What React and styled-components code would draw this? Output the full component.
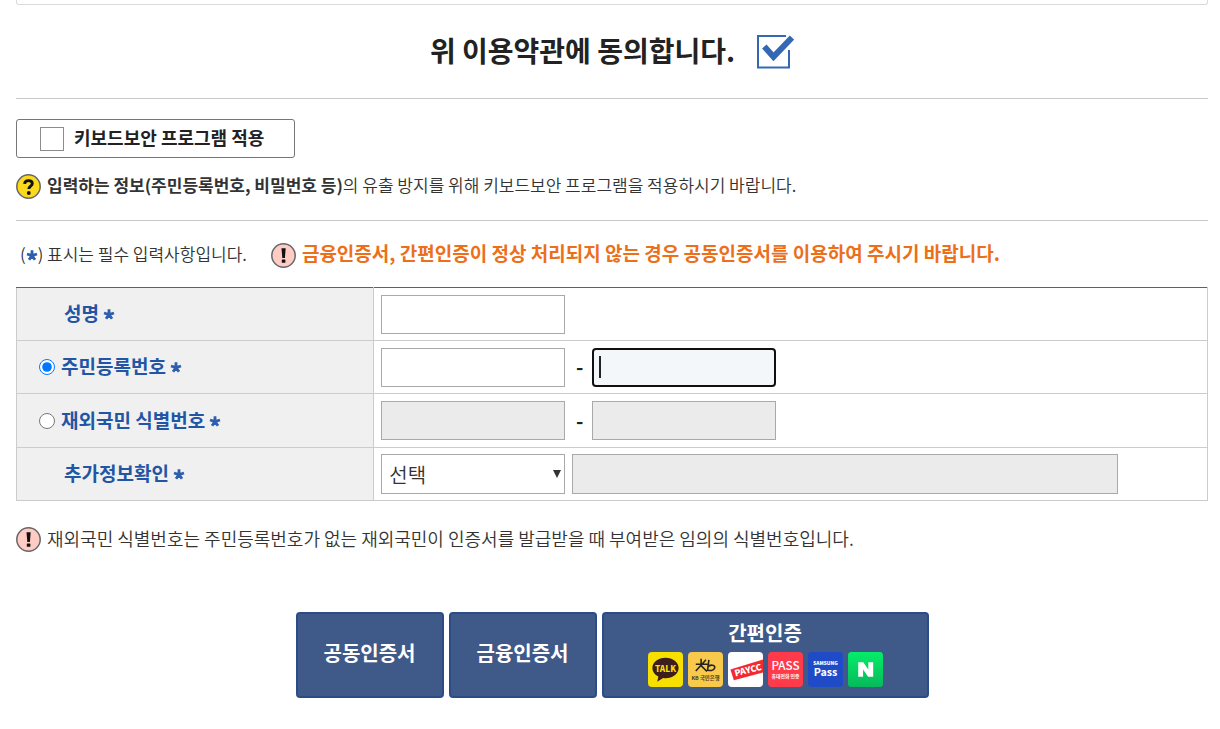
import React from "react";
import styled, { createGlobalStyle, css } from "styled-components";

const GlobalStyle = createGlobalStyle`
  *, *::before, *::after { box-sizing: border-box; }
  body {
    margin: 0;
    background: #fff;
    color: #222;
    font-family: "Noto Sans CJK KR", "Noto Sans", sans-serif;
    font-size: 17px;
  }
  button, input, select { font-family: inherit; margin: 0; }
`;

const Page = styled.main`
  padding: 0 12px 32px 16px;
`;

const TermsBox = styled.div`
  height: 5px;
  border: 1px solid #dadada;
  border-top: 0;
  border-radius: 0 0 3px 3px;
`;

const Agreement = styled.label`
  display: flex;
  align-items: center;
  justify-content: center;
  gap: 22px;
  height: 94px;
  border-bottom: 1px solid #c8c8c8;
  font-size: 28px;
  font-weight: 700;
  line-height: 40px;
  cursor: pointer;

  > span:first-child { padding-bottom: 4px; }
`;

const CheckFace = styled.span`
  position: relative;
  display: block;
  width: 37px;
  height: 34px;

  input {
    position: absolute;
    inset: 0;
    width: 100%;
    height: 100%;
    opacity: 0;
  }
  svg { display: block; }
  input:not(:checked) + svg .tick { display: none; }
`;

const Security = styled.section`
  display: flex;
  flex-direction: column;
  align-items: flex-start;
  gap: 15px;
  height: 122px;
  padding-top: 20px;
  border-bottom: 1px solid #c8c8c8;
`;

const KeyboardOption = styled.label`
  display: flex;
  align-items: center;
  gap: 10px;
  width: 279px;
  height: 39px;
  padding-left: 23px;
  border: 1px solid #767676;
  border-radius: 3px;
  font-size: 18px;
  font-weight: 700;
  line-height: 24px;

  span { padding-bottom: 3px; }
`;

const SquareCheck = styled.input`
  appearance: none;
  width: 24px;
  height: 24px;
  border: 1px solid #8c8c8c;
  background: #fff;
  &:checked { background: #3468b4; }
`;

const Notice = styled.p`
  display: flex;
  align-items: center;
  gap: 6px;
  margin: 0;
  color: #333;
  font-size: ${(p) => (p.$large ? "18px" : "17px")};
  font-weight: 350;
  line-height: 24px;
  b { font-weight: 700; }
  svg { flex: none; }
  span { padding-bottom: 2px; }
`;

const Guide = styled.div`
  display: flex;
  align-items: center;
  gap: 24px;
  height: 66px;
  padding: 2px 0 0 4px;
`;

const RequiredHint = styled.p`
  margin: 0;
  padding-bottom: 4px;
  color: #333;
  font-size: 17px;
  font-weight: 350;
`;

const Warning = styled.strong`
  display: flex;
  align-items: center;
  gap: 6px;
  color: #ec6f1a;
  font-size: 19px;
  font-weight: 700;
  line-height: 26px;

  span { padding-bottom: 4px; }
`;

const FormTable = styled.table`
  width: 100%;
  table-layout: fixed;
  border-collapse: collapse;
  border: 1px solid #ccc;
  border-top-color: #3468b4;

  th, td {
    height: 53px;
    padding: 0 7px;
    border: 1px solid #ccc;
    vertical-align: middle;
  }
  tr:first-child > * { border-top-color: #3468b4; }
  tr:nth-child(3) > * { height: 54px; }
  th {
    width: 30%;
    padding: 0 0 0 22px;
    background: #f0f0f0;
    text-align: left;
  }
`;

const FieldLabel = styled.label`
  display: flex;
  align-items: center;
  gap: 4px;
  padding-left: ${(p) => (p.$indent ? "25px" : "0")};
  color: #2255a4;
  font-size: 19px;
  font-weight: 700;
  line-height: 26px;

  span { padding-bottom: 2px; }
`;

const Radio = styled.input`
  width: 16px;
  height: 16px;
  && { margin: 0 2px 0 0; }
`;

const Fields = styled.div`
  display: flex;
  align-items: center;
  gap: ${(p) => (p.$tight ? "7px" : "0")};
`;

const controlFrame = css`
  height: ${(p) => (p.$tall ? "40px" : "39px")};
  border: 1px solid #a9a9a9;
  border-radius: 0;
  background: #fff;
  color: #333;
`;

const TextBox = styled.input`
  ${controlFrame}
  flex: 0 1 ${(p) => (p.$wide ? "546px" : "184px")};
  min-width: 0;
  padding: 0 6px;
  font-size: 20px;

  &:disabled { background: #ebebeb; }
  &:focus {
    padding: 0 5px;
    border: 2px solid #101010;
    border-radius: 4px;
    outline: 0;
    background: #f3f7f9;
  }
  &:focus:placeholder-shown {
    caret-color: transparent;
    background: linear-gradient(#222, #222) 5px center / 2px 22px no-repeat #f3f7f9;
  }
`;

const SelectWrap = styled.span`
  position: relative;
  flex: 0 1 184px;
  &::after {
    content: "";
    position: absolute;
    top: 16px;
    right: 4px;
    border: 4px solid transparent;
    border-top: 8px solid #333;
    border-bottom: 0;
    pointer-events: none;
  }
`;

const Select = styled.select`
  ${controlFrame}
  display: block;
  width: 100%;
  appearance: none;
  padding: 0 7px;
  font-size: 20px;
  font-weight: 350;
`;

const Dash = styled.span`
  width: 27px;
  padding-left: 2px;
  text-align: center;
  font-size: 20px;
  font-weight: 700;
  line-height: 28px;
`;

const FootNotice = styled(Notice)`
  margin-top: 25px;
`;

const Actions = styled.div`
  display: flex;
  justify-content: center;
  gap: 5px;
  margin-top: 60px;
`;

const AuthButton = styled.button`
  display: flex;
  flex-direction: column;
  align-items: center;
  justify-content: center;
  gap: 5px;
  width: ${(p) => (p.$wide ? "327px" : "148px")};
  height: 86px;
  padding: 0 0 4px;
  border: 2px solid #2b4c87;
  border-radius: 4px;
  background: #3f5989;
  color: #fff;
  font-size: 20px;
  font-weight: 700;
  line-height: 28px;
  cursor: pointer;
`;

const Logos = styled.span`
  display: flex;
  gap: 5px;
`;

function Star() {
  return (
    <svg width="12" height="12" viewBox="0 0 12 12" role="img" aria-label="필수">
      <path
        d="M6 6.6V1.2M6 6.6L1 5M6 6.6L11 5M6 6.6L3 10.8M6 6.6L9 10.8"
        stroke="#2d5fae"
        strokeWidth="2.8"
        fill="none"
      />
    </svg>
  );
}

const InlineStar = styled.span`
  display: inline-block;
  line-height: 0;
`;

function RoundIcon({ kind }) {
  const question = kind === "question";
  return (
    <svg width="25" height="25" viewBox="0 0 25 25" aria-hidden="true">
      <circle cx="12.5" cy="12.5" r="11.7" fill={question ? "#fbd91c" : "#ffcbc5"} stroke="#666" strokeWidth="1.5" />
      {question ? (
        <g>
          <path d="M8.6 9.900C8.700 7.600 10.200 6.600 12.500 6.600c2.300 0 3.800 1.100 3.800 3 0 2.600-3.500 2.600-3.500 5.400" fill="none" stroke="#111" strokeWidth="2.9" />
          <circle cx="12.8" cy="19" r="1.9" fill="#111" />
        </g>
      ) : (
        <g fill="#111">
          <path d="M10.500 5.200h4.200l-.8 9.700h-2.600z" />
          <rect x="10.800" y="16.500" width="3.600" height="3.300" rx=".6" />
        </g>
      )}
    </svg>
  );
}

function CheckMark() {
  return (
    <svg width="37" height="34" viewBox="0 0 37 34" aria-hidden="true">
      <path d="M1 1h31V32.500H1z" fill="#fff" stroke="#3468b4" strokeWidth="2" />
      <g className="tick">
        <path d="M29 0h7v15h-6z" fill="#fff" />
        <path d="M7.500 12l9 10L35.500 2.500" fill="none" stroke="#fff" strokeWidth="8" />
        <path d="M7.300 11.500l9.200 10.300L35 2.500" fill="none" stroke="#3468b4" strokeWidth="6" />
      </g>
    </svg>
  );
}

const logoFont = '"Noto Sans CJK KR", sans-serif';

function Tile({ fill, name, children }) {
  const clip = `tile-${name}`;
  return (
    <svg width="35" height="35" viewBox="0 0 36 36" role="img" aria-label={name}>
      <clipPath id={clip}>
        <rect width="36" height="36" rx="4" />
      </clipPath>
      <g clipPath={`url(#${clip})`} textAnchor="middle" fontFamily={logoFont}>
        <rect width="36" height="36" fill={fill} />
        {children}
      </g>
    </svg>
  );
}

function ProviderLogos() {
  return (
    <Logos>
      <Tile fill="#f7df00" name="talk">
        <path d="M18 6C10.500 6 4.500 10.700 4.500 16.500c0 3.700 2.500 7 6.200 8.800L9.500 30.500l6-3.700c.8.1 1.600.2 2.500.2 7.500 0 13.500-4.700 13.500-10.500S25.500 6 18 6z" fill="#3c1e1e" />
        <text x="18" y="20.500" fontSize="8.500" fontWeight="900" fill="#f7df00">TALK</text>
      </Tile>
      <Tile fill="#f8c94b" name="kb">
        <path d="M8 12.500h12M18.500 8L8 19.500M13.500 7v7l6 6M21.500 8l-1.500 11.500M20.500 15.500c1.500-3 8-2.500 7 .8s-5 3.200-7.500 2.200" fill="none" stroke="#26221c" strokeWidth="1.600" />
        <text x="18" y="29" fontSize="5.500" fill="#4b3b16">KB 국민은행</text>
      </Tile>
      <Tile fill="#fff" name="payco">
        <path d="M2.500 18L38 7v13.500L6 29z" fill="#f4282d" />
        <text x="21" y="22" fontSize="9" fontWeight="900" fill="#fff" transform="rotate(-14 20 20)">PAYCC</text>
      </Tile>
      <Tile fill="#ff3b4b" name="pass">
        <text x="18" y="18" fontSize="12" fontWeight="500" fill="#fff">PASS</text>
        <text x="18" y="27" fontSize="5" fill="#fff">휴대전화 인증</text>
      </Tile>
      <Tile fill="#1f4bc6" name="samsung">
        <text x="18" y="13.500" fontSize="5" fontWeight="900" fill="#fff">SAMSUNG</text>
        <text x="18" y="25" fontSize="11" fontWeight="700" fill="#fff">Pass</text>
      </Tile>
      <Tile fill="#06d363" name="naver">
        <linearGradient id="naver-green" x1="0" y1="0" x2="0" y2="1">
          <stop offset="0" stopColor="#04ed69" />
          <stop offset="1" stopColor="#07b95c" />
        </linearGradient>
        <rect width="36" height="36" fill="url(#naver-green)" />
        <path d="M10.500 10.500h5.200l5.200 7.600v-7.600h5v15h-5.200l-5.200-7.600v7.600h-5z" fill="#fff" />
      </Tile>
    </Logos>
  );
}

export default function App() {
  return (
    <>
      <GlobalStyle />
      <Page>
        <TermsBox />
        <Agreement>
          <span>위 이용약관에 동의합니다.</span>
          <CheckFace>
            <input type="checkbox" defaultChecked />
            <CheckMark />
          </CheckFace>
        </Agreement>

        <Security>
          <KeyboardOption>
            <SquareCheck type="checkbox" />
            <span>키보드보안 프로그램 적용</span>
          </KeyboardOption>
          <Notice>
            <RoundIcon kind="question" />
            <span>
              <b>입력하는 정보(주민등록번호, 비밀번호 등)</b>의 유출 방지를 위해 키보드보안 프로그램을 적용하시기 바랍니다.
            </span>
          </Notice>
        </Security>

        <Guide>
          <RequiredHint>
            (<InlineStar><Star /></InlineStar>) 표시는 필수 입력사항입니다.
          </RequiredHint>
          <Warning>
            <RoundIcon kind="alert" />
            <span>금융인증서, 간편인증이 정상 처리되지 않는 경우 공동인증서를 이용하여 주시기 바랍니다.</span>
          </Warning>
        </Guide>

        <FormTable>
          <tbody>
            <tr>
              <th scope="row">
                <FieldLabel $indent htmlFor="name"><span>성명</span><Star /></FieldLabel>
              </th>
              <td>
                <Fields><TextBox id="name" type="text" /></Fields>
              </td>
            </tr>
            <tr>
              <th scope="row">
                <FieldLabel>
                  <Radio type="radio" name="idType" defaultChecked />
                  <span>주민등록번호</span><Star />
                </FieldLabel>
              </th>
              <td>
                <Fields>
                  <TextBox type="text" aria-label="주민등록번호 앞자리" />
                  <Dash>-</Dash>
                  <TextBox type="text" aria-label="주민등록번호 뒷자리" placeholder=" " autoFocus />
                </Fields>
              </td>
            </tr>
            <tr>
              <th scope="row">
                <FieldLabel>
                  <Radio type="radio" name="idType" />
                  <span>재외국민 식별번호</span><Star />
                </FieldLabel>
              </th>
              <td>
                <Fields>
                  <TextBox type="text" aria-label="식별번호 앞자리" disabled />
                  <Dash>-</Dash>
                  <TextBox type="text" aria-label="식별번호 뒷자리" disabled />
                </Fields>
              </td>
            </tr>
            <tr>
              <th scope="row">
                <FieldLabel $indent htmlFor="extra"><span>추가정보확인</span><Star /></FieldLabel>
              </th>
              <td>
                <Fields $tight>
                  <SelectWrap>
                    <Select id="extra" $tall><option>선택</option></Select>
                  </SelectWrap>
                  <TextBox $wide $tall type="text" aria-label="추가정보" disabled />
                </Fields>
              </td>
            </tr>
          </tbody>
        </FormTable>

        <FootNotice $large>
          <RoundIcon kind="alert" />
          <span>재외국민 식별번호는 주민등록번호가 없는 재외국민이 인증서를 발급받을 때 부여받은 임의의 식별번호입니다.</span>
        </FootNotice>

        <Actions>
          <AuthButton type="button">공동인증서</AuthButton>
          <AuthButton type="button">금융인증서</AuthButton>
          <AuthButton type="button" $wide>
            간편인증
            <ProviderLogos />
          </AuthButton>
        </Actions>
      </Page>
    </>
  );
}
